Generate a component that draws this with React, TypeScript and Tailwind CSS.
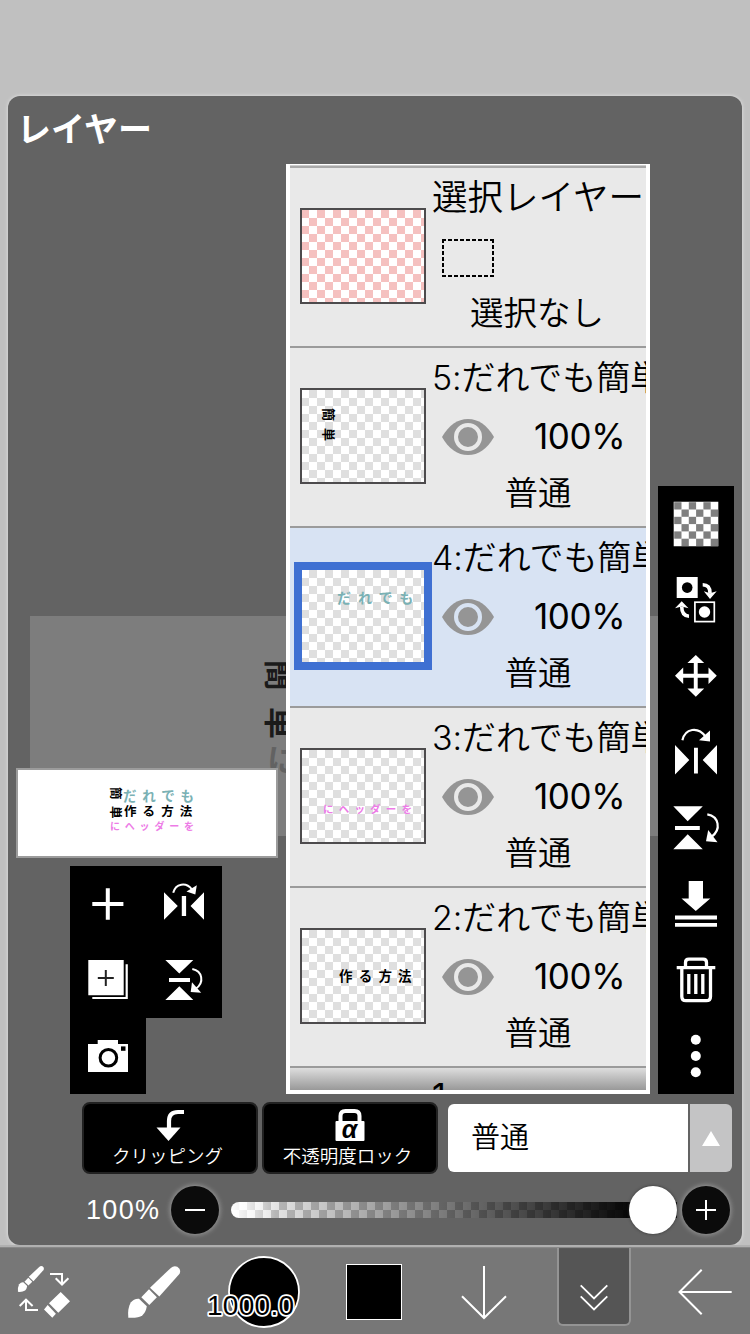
import type { ReactNode } from "react";

const Icon = ({ children }: { children: ReactNode }): JSX.Element => (
  <svg
    viewBox="0 0 76 76"
    className="w-[76px] h-[76px] shrink-0 bg-black"
    fill="white"
  >
    {children}
  </svg>
);

const PlusIcon = () => (
  <Icon>
    <path d="M35.8 22.3h4v13.8h13.6v4H39.8v13.7h-4V40.1H22.3v-4h13.5z" />
  </Icon>
);

const FlipHSmallIcon = () => (
  <Icon>
    <path d="M18 26.3 31.8 40 18 53.8zM58 26.3 44.5 40 58 53.8zM35.8 30h4.3v20h-4.3z" />
    <path
      d="M27.2 26.8C29.5 17.5 40 15.5 46 23.5"
      fill="none"
      stroke="white"
      strokeWidth="2"
    />
    <path d="M50.8 19.3 49.3 28.4 40.5 25.6z" />
  </Icon>
);

const DuplicateIcon = () => (
  <Icon>
    <path d="M18.3 18h35.4v35.2H18.3zM55.6 22.2h2.2V57H22.3v-2h33.3z" />
    <path d="M27.8 36h16M35.8 28v16" stroke="#222" strokeWidth="2" />
  </Icon>
);

const FlipVSmallIcon = () => (
  <Icon>
    <path d="M19.3 18h28L33.3 31.5zM19.3 58h28L33.3 44.3zM23 36h21v4H23z" />
    <path
      d="M46.3 27C56.5 29 58.5 40.5 50 46.5"
      fill="none"
      stroke="white"
      strokeWidth="2"
    />
    <path d="M46 40.3 44.7 50 55.2 50.8z" />
  </Icon>
);

const CameraIcon = () => (
  <Icon>
    <path d="M18 26h9.7v-4H48v4h10v28H18z" />
    <circle cx="38.4" cy="39.7" r="8.3" fill="none" stroke="black" strokeWidth="3" />
    <path d="M51 28.4h4.5v4.4H51z" fill="black" />
  </Icon>
);

const CheckerIcon = () => (
  <Icon>
    <path d="M15.7 15.7h44.6v44.6H15.7z" />
    {[0, 1, 2, 3, 4, 5].map((row) =>
      [0, 1, 2].map((col) => (
        <rect
          key={`${row}-${col}`}
          x={16.2 + (col * 2 + (row % 2)) * 7.3}
          y={16.2 + row * 7.3}
          width="7.3"
          height="7.3"
          fill="#7f7f7f"
        />
      ))
    )}
  </Icon>
);

const SwapIcon = () => (
  <Icon>
    <path d="M18.7 15h21v21h-21z" />
    <circle cx="29.2" cy="25.6" r="5.3" fill="black" />
    <rect x="36.9" y="40.2" width="19.4" height="19.4" fill="none" stroke="white" strokeWidth="1.7" />
    <circle cx="46.5" cy="50" r="5.7" />
    <path
      d="M44.7 22.8C49.5 22.8 52 25 52 31M23.7 44.5C23.7 51 26.2 54 31 54.2"
      fill="none"
      stroke="white"
      strokeWidth="3.6"
    />
    <path d="M45.8 29.3 52 31.2 58.7 29.3 52 37zM17 46.2 23.7 39.2 30.5 46.2 23.7 44.4z" />
  </Icon>
);

const MoveIcon = () => (
  <Icon>
    <path d="M37.8 17 46.2 25h-6.5v10.8h10.8v-6.2l8.3 8.2-8.3 8.2v-6.3H39.7v10.8h6.5L37.8 58.8 29.4 50.5h6.4V39.7H25.2V46L17 37.8l8.2-8.2v6.2h10.6V25h-6.4z" />
  </Icon>
);

const FlipHIcon = () => (
  <Icon>
    <path d="M17 31 31.3 46 17 60.6zM59 31 44.7 46 59 60.6zM36 33.7h3.9v25.8H36z" />
    <path
      d="M24.4 26.3C27 14 40 12.3 47.5 22.5"
      fill="none"
      stroke="white"
      strokeWidth="2.2"
    />
    <path d="M52 16.5V27.5L41 26.3z" />
  </Icon>
);

const FlipVIcon = () => (
  <Icon>
    <path d="M15.3 16.3h29.5L29.7 31.2zM15.3 59.2h29.5L29.7 44.3zM17 36h24.8v4H17z" />
    <path
      d="M49.3 24.4C61 26.5 63.5 39.5 53.5 46.8"
      fill="none"
      stroke="white"
      strokeWidth="2.2"
    />
    <path d="M50.2 40 48 51.3 59.5 52.2z" />
  </Icon>
);

const MergeIcon = () => (
  <Icon>
    <path d="M30.7 15H45v17.5h7.3L37.8 44.9 23.5 32.5h7.2zM17 49.6h42v4H17zM17 57h42v3.7H17z" />
  </Icon>
);

const TrashIcon = () => (
  <Icon>
    <g fill="none" stroke="white" strokeWidth="3.3">
      <path d="M18.7 25.6h38.6M23.8 25.6V54.5q0 4.2 4.2 4.2h20.3q4.2 0 4.2-4.2V25.6M27.5 25.6V20.5q0-3.4 3.4-3.4h14.2q3.4 0 3.4 3.4v5.1" />
      <path d="M30.8 32v20M37.8 32v20M44.8 32v20" />
    </g>
  </Icon>
);

const MoreIcon = () => (
  <Icon>
    <circle cx="37.8" cy="21.7" r="5" />
    <circle cx="37.8" cy="38" r="5" />
    <circle cx="37.8" cy="54.3" r="5" />
  </Icon>
);

const Eye = ({ ring }: { ring: string }) => (
  <svg viewBox="0 0 52 36" className="w-[52px] h-9 shrink-0">
    <path
      d="M0 18C7 6 15.5 0 26 0S45 6 52 18C45 30 36.5 36 26 36S7 30 0 18z"
      fill="#959595"
    />
    <circle cx="26" cy="18" r="12" fill="none" stroke={ring} strokeWidth="4" />
  </svg>
);

type LayerProps = {
  name: string;
  selected?: boolean;
  children?: ReactNode;
};

const Layer = ({ name, selected, children }: LayerProps): JSX.Element => (
  <div
    className={
      selected
        ? "flex h-[180px] shrink-0 border-b-2 border-[#9b9b9b] bg-[#d8e3f3]"
        : "flex h-[180px] shrink-0 border-b-2 border-[#9b9b9b] bg-[#e9e9e9]"
    }
  >
    <div
      className={
        selected
          ? "mt-10 ml-[10px] w-[126px] h-24 shrink-0 border-2 border-[#3f70d2] ring-6 ring-[#3f70d2] bg-[conic-gradient(#dfdfdf_25%,#fff_0_50%,#dfdfdf_0_75%,#fff_0)] bg-[length:16px_16px] bg-[position:-1px_0px]"
          : "mt-10 ml-[10px] w-[126px] h-24 shrink-0 border-2 border-[#4d4b4d] bg-[conic-gradient(#dfdfdf_25%,#fff_0_50%,#dfdfdf_0_75%,#fff_0)] bg-[length:16px_16px] bg-[position:-1px_0px]"
      }
    >
      {children}
    </div>
    <div className="ml-[6px] w-[214px] shrink-0 overflow-hidden">
      <p className="mt-[6px] h-12 leading-[48px] text-[34px] font-[350] tracking-[-0.1px] whitespace-nowrap">
        {name}
      </p>
      <div className="mt-[17px] ml-[10px] flex h-9 items-center">
        <Eye ring={selected ? "#d8e3f3" : "#e9e9e9"} />
        <span className="-mt-[3px] ml-[40px] text-[35px] leading-9 tracking-[-0.4px]">
          100%
        </span>
      </div>
      <p className="mt-[14px] h-12 w-[212px] text-center leading-[48px] text-[33.5px] font-[350]">
        普通
      </p>
    </div>
  </div>
);

const BrushShape = () => (
  <>
    <path d="M51 39.7 71.8 19.9q3-2.7 6.5-1.2 4.2 2.3 2.3 7.1L60.3 48.5z" />
    <path d="M50 41.3 57.9 49.3 50.3 57 42.3 49.3z" />
    <path d="M40 50.7 47.8 58.2Q47 64 43.5 67.2 39 70.3 29.3 69.7 28.3 61 31.7 54.5 35 50.3 40 50.7z" />
  </>
);

const BottomBar = (): JSX.Element => (
  <div className="flex h-[86px] overflow-hidden bg-[#777] text-white">
    <svg viewBox="0 0 99 86" className="h-[86px] w-[99px] shrink-0" fill="white">
      <g transform="translate(3.3 9) scale(.5)">
        <BrushShape />
      </g>
      <path d="M60.7 44 70 53.3 58.3 64.7 49 55.3zM47.7 57 55.9 65.8 52.3 69.7 44 61.6z" />
      <path
        d="M50 26h12v10.5M55.7 30.2 62 36.5 68.4 30.2M38 62H26V51.7M19.7 58 26 51.7 32.6 58"
        fill="none"
        stroke="white"
        strokeWidth="2"
      />
    </svg>
    <svg viewBox="0 0 110 86" className="h-[86px] w-[110px] shrink-0" fill="white">
      <BrushShape />
    </svg>
    <svg viewBox="0 0 110 86" className="h-[86px] w-[110px] shrink-0 overflow-visible">
      <circle cx="55" cy="44" r="35" fill="black" stroke="white" strokeWidth="1.8" />
      <text
        x="-2"
        y="67"
        textLength="87"
        fontSize="28"
        fontFamily="Liberation Sans, sans-serif"
        fill="black"
        stroke="white"
        strokeWidth="3.5"
        strokeLinejoin="round"
        paintOrder="stroke"
      >
        1000.0
      </text>
    </svg>
    <div className="w-[110px] shrink-0 pt-4 pl-[27px]">
      <div className="h-14 w-14 border border-white bg-black" />
    </div>
    <svg
      viewBox="0 0 110 86"
      className="h-[86px] w-[110px] shrink-0"
      fill="none"
      stroke="white"
      strokeWidth="2"
    >
      <path d="M55 18v51.5M33 48.3 55 70 77 48.3" />
    </svg>
    <div className="w-[110px] shrink-0 pl-[18px]">
      <div className="h-[78px] w-[74px] rounded-b-md border-2 border-t-0 border-[#949494] bg-[#555]">
        <svg
          viewBox="20 0 70 76"
          className="h-[76px] w-[70px]"
          fill="none"
          stroke="white"
          strokeWidth="1.8"
        >
          <path d="M41.7 37.3 55 50.5 68.3 37.3M41.7 48.3 55 61.5 68.3 48.3" />
        </svg>
      </div>
    </div>
    <svg
      viewBox="0 0 110 86"
      className="h-[86px] w-[110px] shrink-0"
      fill="none"
      stroke="white"
      strokeWidth="2"
    >
      <path d="M30.5 44h52.2M52.7 21.7 30.5 44 52.7 66.3" />
    </svg>
  </div>
);

const Preview = (): JSX.Element => (
  <div className="relative ml-2 h-[90px] w-[262px] border-2 border-[#9c9c9c] bg-white text-[12.5px] font-bold">
    <span className="absolute left-[91px] top-[17px] h-3 w-3 rotate-90 leading-3">簡</span>
    <span className="absolute left-[91px] top-[36px] h-3 w-3 rotate-90 leading-3">単</span>
    <span className="absolute left-[105px] top-[19px] leading-[14px] text-[13.5px] tracking-[5.8px] text-[#7ab1b4]">だれでも</span>
    <span className="absolute left-[106px] top-[35px] leading-[14px] tracking-[6.1px]">作る方法</span>
    <span className="absolute left-[92px] top-[50px] leading-[12px] text-[10px] tracking-[4.8px] text-[#ed7be6]">にヘッダーを</span>
  </div>
);

export default function App(): JSX.Element {
  return (
    <div className="h-[1334px] w-[750px] overflow-hidden bg-[#c0c0c0] font-['Inter','Noto_Sans_CJK_JP',sans-serif] text-black">
      <div className="h-[1245px] px-2 pt-24">
        <div className="relative h-[1149px] rounded-xl bg-[#636363] shadow-[0_0_3px_1px_#d6d6d6]">
          {/* dimmed canvas behind the panel */}
          <div className="absolute left-[22px] top-[520px] h-[220px] w-[690px] bg-[#7d7d7d] text-[32px] font-bold leading-8 text-[#1a1a1a]">
            <span className="absolute left-[233px] top-[43px] h-8 w-8 rotate-90">簡</span>
            <span className="absolute left-[233px] top-[91px] h-8 w-8 rotate-90">単</span>
            <span className="absolute left-[237px] top-[129px] h-8 w-8 text-[#626262]">に</span>
          </div>

          <div className="relative flex h-full flex-col">
            <h1 className="h-[68px] pl-[9px] leading-[67px] text-[34px] font-bold text-white">
              レイヤー
            </h1>

            <div className="flex h-[930px]">
              <div className="flex w-[278px] flex-col justify-end">
                <Preview />
                <div className="mt-2 ml-[62px] grid w-[152px] grid-cols-2">
                  <PlusIcon />
                  <FlipHSmallIcon />
                  <DuplicateIcon />
                  <FlipVSmallIcon />
                  <CameraIcon />
                </div>
              </div>

              <div className="flex w-[364px] flex-col overflow-hidden border-4 border-t-1 border-white bg-[#e9e9e9]">
                <div className="h-[3px] shrink-0 border-b-2 border-[#a8a8a8] bg-[#ccc]" />
                <div className="flex h-[180px] shrink-0 border-b-2 border-[#9b9b9b]">
                  <div className="mt-10 ml-[10px] h-24 w-[126px] shrink-0 border-2 border-[#4d4b4d] bg-[conic-gradient(#fff_25%,#f5c1c0_0_50%,#fff_0_75%,#f5c1c0_0)] bg-[length:16px_16px] bg-[position:-1px_0px]" />
                  <div className="ml-[6px] w-[214px] shrink-0">
                    <p className="mt-[6px] h-12 leading-[48px] text-[35.5px] font-[350] whitespace-nowrap">
                      選択レイヤー
                    </p>
                    <svg viewBox="0 0 52 38" className="mt-[17px] ml-[10px] h-[38px] w-[52px]">
                      <path
                        d="M0 1h52M0 37h52M1 0v38M51 0v38"
                        stroke="black"
                        strokeWidth="2"
                        strokeDasharray="4 2"
                      />
                    </svg>
                    <p className="mt-[12px] h-12 w-[210px] text-center leading-[48px] text-[33.5px] font-[350]">
                      選択なし
                    </p>
                  </div>
                </div>
                <Layer name="5:だれでも簡単">
                  <div className="flex flex-col gap-[7px] pt-[18px] pl-5 text-[13px] font-bold leading-[13px]">
                    <span className="h-[13px] w-[13px] rotate-90">簡</span>
                    <span className="h-[13px] w-[13px] rotate-90">単</span>
                  </div>
                </Layer>
                <Layer name="4:だれでも簡単" selected>
                  <p className="pt-[20px] pl-[35px] text-[14px] font-bold leading-4 tracking-[6.9px] whitespace-nowrap text-[#7ab1b4]">
                    だれでも
                  </p>
                </Layer>
                <Layer name="3:だれでも簡単">
                  <p className="pt-[54px] pl-[21px] text-[10.5px] font-bold leading-3 tracking-[5.2px] whitespace-nowrap text-[#ed7be6]">
                    にヘッダーを
                  </p>
                </Layer>
                <Layer name="2:だれでも簡単">
                  <p className="pt-[38px] pl-[37px] text-[13.5px] font-bold leading-4 tracking-[6.2px] whitespace-nowrap">
                    作る方法
                  </p>
                </Layer>
                <div className="h-[22px] shrink-0 overflow-hidden bg-linear-to-b from-[#dedede] to-[#999] pl-[142px]">
                  <p className="mt-[4px] leading-[48px] text-[34px]">1</p>
                </div>
              </div>

              <div className="ml-2 flex flex-col justify-end">
                <CheckerIcon />
                <SwapIcon />
                <MoveIcon />
                <FlipHIcon />
                <FlipVIcon />
                <MergeIcon />
                <TrashIcon />
                <MoreIcon />
              </div>
            </div>

            <div className="mt-2 ml-[74px] flex h-[72px] gap-1 text-[18.5px] font-[350] text-white">
              <button className="flex w-44 flex-col items-center rounded-lg border-2 border-[#222] bg-black">
                <svg viewBox="0 0 30 34" className="mt-[4px] h-[34px] w-[30px]">
                  <path
                    d="M29 4H23q-9 0-9 9v8"
                    fill="none"
                    stroke="white"
                    strokeWidth="4.2"
                  />
                  <path d="M1.5 19.5h24L13.5 33z" fill="white" />
                </svg>
                <span className="mr-[5px] leading-7">クリッピング</span>
              </button>
              <button className="flex w-44 flex-col items-center rounded-lg border-2 border-[#222] bg-black">
                <svg viewBox="0 0 30 34" className="mt-[4px] h-[34px] w-[30px]">
                  <path
                    d="M5.5 14V8q0-5 5-5h9q5 0 5 5v6"
                    fill="none"
                    stroke="white"
                    strokeWidth="4"
                  />
                  <rect x="0.5" y="13" width="29" height="20" rx="1" fill="white" />
                  <text
                    x="14.5"
                    y="29.5"
                    textAnchor="middle"
                    fontSize="25"
                    fontWeight="bold"
                    fontStyle="italic"
                    fontFamily="Liberation Sans, sans-serif"
                  >
                    α
                  </text>
                </svg>
                <span className="mr-[5px] leading-7">不透明度ロック</span>
              </button>
              <div className="mt-[2px] ml-[6px] flex h-[68px] gap-[2px] overflow-hidden rounded-md">
                <div className="w-60 bg-white pl-[23px] text-[29px] leading-[67px] text-black">
                  普通
                </div>
                <div className="flex w-[42px] items-center justify-center bg-[#c4c4c5]">
                  <svg viewBox="0 0 18 15" className="h-[15px] w-[18px]">
                    <path d="M9 0 18 15H0z" fill="white" />
                  </svg>
                </div>
              </div>
            </div>

            <div className="mt-[12px] flex h-12 items-center">
              <span className="w-[155px] pl-[78px] font-['Liberation_Sans',sans-serif] text-[27px] tracking-[1.3px] text-white">
                100%
              </span>
              <div className="ml-[8px] flex h-12 w-12 shrink-0 items-center justify-center rounded-full bg-[#0b0b0b] shadow-[0_0_5px_1px_#999]">
                <div className="h-[2px] w-5 bg-white" />
              </div>
              <div className="ml-[12px] flex h-4 w-[446px] shrink-0 items-center rounded-l-full bg-[linear-gradient(to_right,#fff,transparent_10%),linear-gradient(to_right,transparent,black_92%),conic-gradient(#fff_25%,#ccc_0_50%,#fff_0_75%,#ccc_0)] bg-[length:100%_100%,100%_100%,16px_16px]">
                <div className="ml-auto h-12 w-12 shrink-0 rounded-full bg-white shadow-[0_0_3px_#333]" />
              </div>
              <div className="ml-[5px] flex h-12 w-12 shrink-0 items-center justify-center rounded-full bg-[#0b0b0b] shadow-[0_0_5px_1px_#999]">
                <svg viewBox="0 0 20 20" className="h-5 w-5" stroke="white" strokeWidth="2">
                  <path d="M0 10h20M10 0v20" />
                </svg>
              </div>
            </div>
          </div>
        </div>
      </div>
      <div className="relative h-[3px] border-b border-[#888] bg-[#b0b0b0]" />
      <BottomBar />
    </div>
  );
}
